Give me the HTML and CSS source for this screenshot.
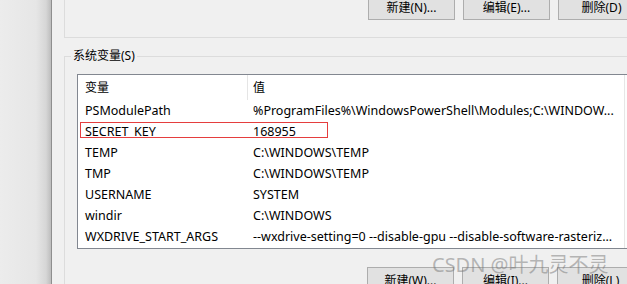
FILE: index.html
```html
<!DOCTYPE html>
<html lang="zh-CN">
<head>
    <meta charset="UTF-8">
    <title>环境变量</title>
    <link rel="stylesheet" href="styles.css">
</head>
<body>

    <div class="screen">
        <div class="desktop"></div>

        <div class="window">
            <div class="user-group">
                <div class="btn-row">
                    <button>新建(N)...</button>
                    <button>编辑(E)...</button>
                    <button>删除(D)</button>
                </div>
            </div>

            <fieldset class="sys-group">
                <legend>系统变量(S)</legend>

                <div class="var-list">
                    <div class="var-table">
                        <div class="var-head">
                            <span>变量</span>
                            <span>值</span>
                        </div>
                        <div class="var-row">
                            <span>PSModulePath</span>
                            <span>%ProgramFiles%\WindowsPowerShell\Modules;C:\WINDOW...</span>
                        </div>
                        <div class="var-row">
                            <span>SECRET_KEY</span>
                            <span>168955</span>
                        </div>
                        <div class="var-row">
                            <span>TEMP</span>
                            <span>C:\WINDOWS\TEMP</span>
                        </div>
                        <div class="var-row">
                            <span>TMP</span>
                            <span>C:\WINDOWS\TEMP</span>
                        </div>
                        <div class="var-row">
                            <span>USERNAME</span>
                            <span>SYSTEM</span>
                        </div>
                        <div class="var-row">
                            <span>windir</span>
                            <span>C:\WINDOWS</span>
                        </div>
                        <div class="var-row">
                            <span>WXDRIVE_START_ARGS</span>
                            <span>--wxdrive-setting=0 --disable-gpu --disable-software-rasteriz...</span>
                        </div>

                        <!-- red box drawn over the screenshot -->
                        <div class="highlight"></div>
                    </div>
                    <div class="scroll-track"></div>
                </div>

                <div class="btn-row bottom">
                    <button>新建(W)...</button>
                    <button>编辑(I)...</button>
                    <button>删除(L)</button>
                </div>

                <div class="watermark">CSDN @叶九灵不灵</div>
            </fieldset>
        </div>
    </div>

</body>
</html>
```

FILE: styles.css
```css
html, body {
    margin: 0;
    height: 100%;
    overflow: hidden;
}

body {
    font-family: "Noto Sans", "Noto Sans CJK SC", sans-serif;
    font-size: 12px;
    color: #000;
    background-color: #f0f0f0;
}

.screen {
    display: flex;
    width: 720px;
    height: 284px;
}

.desktop {
    width: 51px;
    flex: none;
    background: linear-gradient(to right, #ececec 0, #e6e6e6 36px, #d6d6d6 46px, #bdbdbd 51px);
}

.window {
    flex: 1;
    padding-left: 12px;
    background-color: #f0f0f0;
    border-left: 1px solid #8e8e8e;
}

.user-group {
    display: flow-root;
    height: 37px;
    border-left: 1px solid #dcdcdc;
    border-bottom: 1px solid #dcdcdc;
}

.btn-row {
    display: flex;
    gap: 8px;
    padding-left: 303px;
    margin-top: -6px;
}

.btn-row button {
    width: 87px;
    height: 26px;
    flex: none;
    padding: 0;
    font-family: inherit;
    font-size: 12px;
    color: #000;
    background-color: #e1e1e1;
    border: 1px solid #adadad;
}

.sys-group {
    position: relative;
    margin: 10px 0 0 0;
    padding: 0 0 0 12px;
    min-width: 0;
    height: 260px;
    border: 1px solid #dcdcdc;
    border-bottom: none;
}

.sys-group legend {
    margin-left: -6px;
    padding: 0 2px;
    line-height: 16px;
}

.var-list {
    display: flex;
    width: 600px;
    margin-top: 10px;
    font-size: 12.5px;
    background-color: #fff;
    border: 1px solid #828790;
}

.var-table {
    position: relative;
    width: 546px;
    padding-bottom: 1px;
}

.var-head,
.var-row {
    display: grid;
    grid-template-columns: 170px 1fr;
    white-space: nowrap;
}

.var-head {
    height: 25px;
    line-height: 25px;
    font-size: 12px;
}

.var-row {
    height: 21px;
    line-height: 21px;
}

.var-head span:first-child,
.var-row span:first-child {
    padding-left: 7px;
}

.var-head span:first-child {
    border-right: 1px solid #e5e5e5;
}

.var-head span:last-child,
.var-row span:last-child {
    padding-left: 5px;
    overflow: hidden;
}

.highlight {
    position: absolute;
    left: 2px;
    top: 47px;
    width: 246px;
    height: 14px;
    border: 1px solid #e53e3e;
}

.scroll-track {
    width: 17px;
    flex: none;
    background-color: #fdfdfd;
    border-left: 1px solid #e6e6e6;
}

.btn-row.bottom {
    margin-top: 18px;
    padding-left: 290px;
}

.watermark {
    position: absolute;
    left: 367px;
    top: 185px;
    font-size: 20px;
    color: rgba(120, 120, 120, 0.5);
    white-space: nowrap;
}
```
